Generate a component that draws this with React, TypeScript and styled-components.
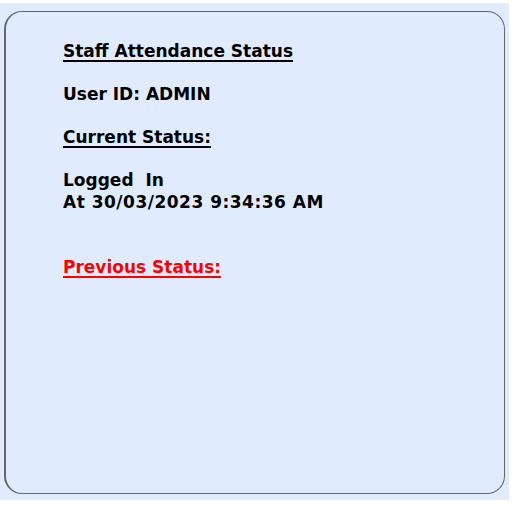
import styled, { createGlobalStyle } from "styled-components";

const GlobalStyle = createGlobalStyle`
  html, body {
    margin: 0;
    padding: 0;
    background: #ffffff;
  }
`;

const Page = styled.div`
  margin-top: 3px;
  width: 509px;
  height: 497px;
  padding: 8px 4px 6px 4px;
  box-sizing: border-box;
  background: #e0ecfe;
`;

const Panel = styled.div`
  height: 100%;
  box-sizing: border-box;
  border: 1px solid #666666;
  border-left-width: 2px;
  border-radius: 18px;
  padding: 28px 20px 0 57px;
  font-family: "DejaVu Sans", Verdana, sans-serif;
  font-weight: bold;
  font-size: 17px;
  line-height: 22px;
  color: #000000;
`;

const Line = styled.div<{ $gap?: number }>`
  margin-bottom: ${(p) => p.$gap ?? 21}px;
`;

const Heading = styled.span<{ $red?: boolean }>`
  text-decoration: underline;
  text-decoration-thickness: 2px;
  text-underline-offset: 3px;
  color: ${(p) => (p.$red ? "#ff0000" : "#000000")};
`;

const Stamp = styled.span`
  letter-spacing: 0.5px;
`;

function App() {
  return (
    <>
      <GlobalStyle />
      <Page>
        <Panel>
          <Line>
            <Heading>Staff Attendance Status</Heading>
          </Line>
          <Line>User ID: ADMIN</Line>
          <Line>
            <Heading>Current Status:</Heading>
          </Line>
          <Line $gap={43}>
            Logged&nbsp; In
            <br />
            <Stamp>At 30/03/2023 9:34:36 AM</Stamp>
          </Line>
          <Line>
            <Heading $red>Previous Status:</Heading>
          </Line>
        </Panel>
      </Page>
    </>
  );
}

export default App;
